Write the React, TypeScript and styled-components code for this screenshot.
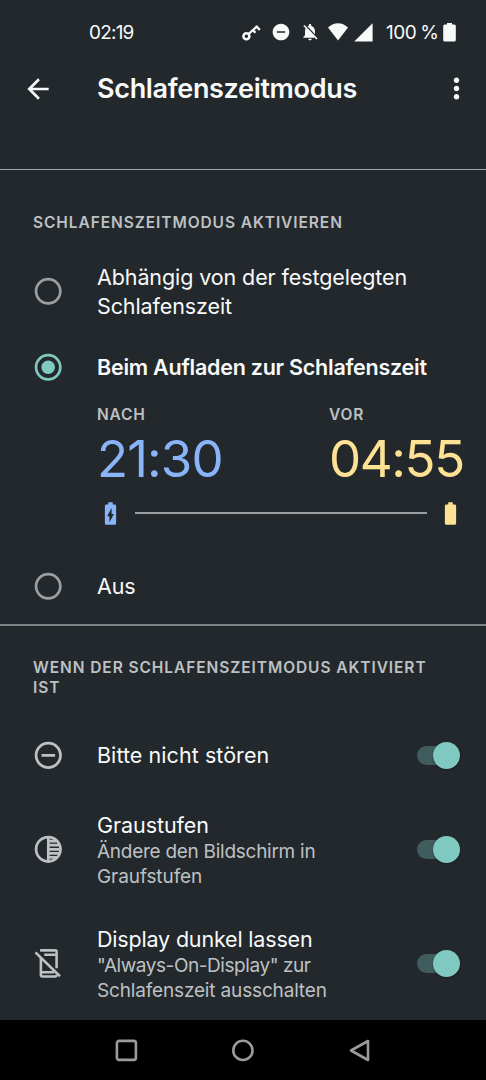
import React from 'react';
import styled, { createGlobalStyle } from 'styled-components';
import {
  MdArrowBack,
  MdBatteryChargingFull,
  MdBatteryFull,
  MdDoNotDisturbOn,
  MdMoreVert,
  MdNotificationsOff,
  MdRadioButtonChecked,
  MdRadioButtonUnchecked,
  MdRemoveCircleOutline,
  MdTonality,
} from 'react-icons/md';

const color = {
  background: '#23282c',
  text: '#f8fafa',
  muted: '#bdc1c4',
  outline: '#9b9fa2',
  accent: '#80c9c1',
  track: '#405c5d',
  start: '#8ab4f8',
  end: '#fde293',
};

const GlobalStyle = createGlobalStyle`
  *, *::before, *::after { box-sizing: border-box; }
  body { margin: 0; background: ${color.background}; }
`;

const Screen = styled.div`
  display: flex;
  flex-direction: column;
  width: 486px;
  height: 1080px;
  overflow: hidden;
  background: ${color.background};
  color: ${color.text};
  font-family: Inter, 'Liberation Sans', sans-serif;
  svg { display: block; flex: none; }
`;

const StatusBar = styled.div`
  display: flex;
  align-items: center;
  justify-content: space-between;
  height: 64px;
  padding: 0 30px 0 89px;
  font-size: 19px;
  letter-spacing: -0.8px;
`;

const StatusIcons = styled.div`
  display: flex;
  align-items: center;
`;

const StatusGlyph = styled.span<{ $gap?: number }>`
  display: flex;
  margin-right: ${(p) => p.$gap ?? 0}px;
`;

const BatteryText = styled.span`
  width: 52px;
  margin-right: 5px;
  letter-spacing: -0.45px;
  word-spacing: -1px;
  white-space: nowrap;
`;

const AppBar = styled.header`
  display: flex;
  align-items: center;
  height: 64px;
  padding: 0 13px 14px 22px;
  border-bottom: 1px solid #202529;
`;

const Title = styled.h1`
  flex: 1;
  margin: 0 0 0 43px;
  font-size: 27px;
  font-weight: 600;
  line-height: 34px;
  letter-spacing: -0.33px;
`;

const ScrolledStrip = styled.div`
  height: 42px;
  border-bottom: 1px solid #a0a4a6;
`;

const ModeSection = styled.section`
  height: 456px;
  padding-top: 43px;
  border-bottom: 2px solid #7c8184;
`;

const ActionSection = styled.section`
  padding-top: 32px;
`;

const SectionHeading = styled.h2<{ $bottom: number }>`
  margin: 0 0 ${(p) => p.$bottom}px;
  padding: 0 40px 0 33px;
  color: ${color.muted};
  font-size: 15.5px;
  font-weight: 600;
  line-height: 20px;
  letter-spacing: 0.92px;
`;

const RadioRow = styled.div<{ $top: number }>`
  display: flex;
  align-items: center;
  margin-top: ${(p) => p.$top}px;
  padding-left: 32.3px;
`;

const RadioLabel = styled.span<{ $strong?: boolean }>`
  margin-left: 32.3px;
  font-size: 21.5px;
  font-weight: ${(p) => (p.$strong ? 600 : 400)};
  line-height: 29px;
  letter-spacing: ${(p) => (p.$strong ? -0.24 : -0.1)}px;
`;

const TimeRange = styled.div`
  display: flex;
  justify-content: space-between;
  margin: 20.5px 22px 0 97px;
`;

const TimeColumn = styled.div`
  width: 135px;
`;

const TimeLabel = styled.div`
  color: ${color.muted};
  font-size: 15.5px;
  font-weight: 600;
  line-height: 22px;
  letter-spacing: 0.8px;
`;

const TimeValue = styled.div<{ $tone: string; $tracking: number }>`
  color: ${(p) => p.$tone};
  font-size: 51px;
  line-height: 66px;
  letter-spacing: ${(p) => p.$tracking}px;
  white-space: nowrap;
`;

const ChargeSpan = styled.div`
  display: flex;
  align-items: center;
  justify-content: space-between;
  height: 43px;
  margin: 0 22px 0 97px;
`;

const SpanLine = styled.div`
  width: 292px;
  height: 2px;
  background: ${color.outline};
`;

const SettingRow = styled.div<{ $height: number }>`
  display: flex;
  align-items: center;
  height: ${(p) => p.$height}px;
  padding: 0 26px 0 32px;
`;

const SettingText = styled.div`
  flex: 1;
  margin-left: 32.4px;
`;

const SettingTitle = styled.div<{ $tracking: number }>`
  font-size: 21.5px;
  line-height: 28px;
  letter-spacing: ${(p) => p.$tracking}px;
`;

const SettingSummary = styled.div`
  margin-bottom: -2px;
  color: ${color.muted};
  font-size: 19px;
  line-height: 25.5px;
`;

const SummaryLine = styled.div<{ $tracking: number }>`
  letter-spacing: ${(p) => p.$tracking}px;
  white-space: nowrap;
`;

const SwitchTrack = styled.span`
  display: flex;
  align-items: center;
  justify-content: flex-end;
  width: 43px;
  height: 19px;
  border-radius: 10px;
  background: linear-gradient(90deg, ${color.track} 34px, transparent 34px);
`;

const Thumb = styled.span`
  flex: none;
  width: 27px;
  height: 27px;
  border-radius: 50%;
  background: ${color.accent};
  box-shadow: 0 1px 2px rgba(0, 0, 0, 0.35);
`;

const NavBar = styled.nav`
  display: flex;
  align-items: center;
  justify-content: center;
  gap: 92px;
  flex: none;
  height: 60px;
  margin-top: auto;
  padding-top: 1px;
  background: #000;
`;

const KeyIcon = () => (
  <svg width="19" height="17" viewBox="0 0 19 17" fill="none" stroke={color.text}>
    <circle cx="4.4" cy="12.2" r="3" strokeWidth="2.5" />
    <path d="M6.6 10 15.2 2.2" strokeWidth="2.3" />
    <path d="M10.8 6 13.4 8.8M14.2 2.2 17.8 6" strokeWidth="2.4" />
  </svg>
);

const WifiIcon = () => (
  <svg width="20" height="18" viewBox="0 0 20 18" fill={color.text}>
    <path d="M0 4.6C6-1.2 14-1.2 20 4.6L10 17.4Z" />
  </svg>
);

const SignalIcon = () => (
  <svg width="19" height="19" viewBox="0 0 19 19" fill={color.text}>
    <path d="M18.6.2V18.6H.2Z" />
  </svg>
);

const StatusBatteryIcon = () => (
  <svg width="13" height="19" viewBox="0 0 13 19" fill={color.text}>
    <path d="M4 0h5v1.5h2.4A1.5 1.5 0 0 1 12.8 3v14a1.5 1.5 0 0 1-1.5 1.5H1.7A1.5 1.5 0 0 1 .2 17V3a1.5 1.5 0 0 1 1.5-1.5H4Z" />
  </svg>
);

const DisplayOffIcon = () => (
  <svg width="32.6" height="32.6" viewBox="0 0 33 33" fill="none" stroke={color.muted}>
    <path d="M8.2 3.4H23.4Q24.9 3.4 24.9 4.9V21.6" strokeWidth="2.6" />
    <path d="M9 10V28.1Q9 29.8 10.5 29.8H23.4Q24.9 29.8 24.9 28" strokeWidth="2.6" />
    <path d="M12.4 7.9H24M9 25.6H22.6" strokeWidth="2.4" />
    <path d="M3.5 5.4 28.3 29.6" strokeWidth="2.6" />
  </svg>
);

const Radio = ({ checked = false }: { checked?: boolean }) =>
  checked ? (
    <MdRadioButtonChecked size={32.4} color={color.accent} />
  ) : (
    <MdRadioButtonUnchecked size={32.4} color={color.outline} />
  );

const Switch = () => (
  <SwitchTrack>
    <Thumb />
  </SwitchTrack>
);

interface Setting {
  icon: React.ReactNode;
  title: string;
  tracking: number;
  summary: { text: string; tracking: number }[];
  height: number;
}

const settings: Setting[] = [
  {
    icon: <MdRemoveCircleOutline size={32.6} color={color.muted} />,
    title: 'Bitte nicht stören',
    tracking: 0.06,
    summary: [],
    height: 74,
  },
  {
    icon: <MdTonality size={32.6} color={color.muted} />,
    title: 'Graustufen',
    tracking: -0.06,
    summary: [
      { text: 'Ändere den Bildschirm in', tracking: -0.27 },
      { text: 'Graufstufen', tracking: -0.08 },
    ],
    height: 114,
  },
  {
    icon: <DisplayOffIcon />,
    title: 'Display dunkel lassen',
    tracking: -0.18,
    summary: [
      { text: '"Always-On-Display" zur', tracking: -0.44 },
      { text: 'Schlafenszeit ausschalten', tracking: -0.16 },
    ],
    height: 114,
  },
];

export default function App() {
  return (
    <>
      <GlobalStyle />
      <Screen>
        <StatusBar>
          <span>02:19</span>
          <StatusIcons>
            <StatusGlyph $gap={10}><KeyIcon /></StatusGlyph>
            <StatusGlyph $gap={9}><MdDoNotDisturbOn size={20} /></StatusGlyph>
            <StatusGlyph $gap={8}><MdNotificationsOff size={20} /></StatusGlyph>
            <StatusGlyph $gap={6}><WifiIcon /></StatusGlyph>
            <StatusGlyph $gap={13}><SignalIcon /></StatusGlyph>
            <BatteryText>100 %</BatteryText>
            <StatusBatteryIcon />
          </StatusIcons>
        </StatusBar>
        <AppBar>
          <MdArrowBack size={32} />
          <Title>Schlafenszeitmodus</Title>
          <MdMoreVert size={33} />
        </AppBar>
        <ScrolledStrip />
        <ModeSection>
          <SectionHeading $bottom={29.5}>SCHLAFENSZEITMODUS AKTIVIEREN</SectionHeading>
          <RadioRow $top={0}>
            <Radio />
            <RadioLabel>Abhängig von der festgelegten<br />Schlafenszeit</RadioLabel>
          </RadioRow>
          <RadioRow $top={30.5}>
            <Radio checked />
            <RadioLabel $strong>Beim Aufladen zur Schlafenszeit</RadioLabel>
          </RadioRow>
          <TimeRange>
            <TimeColumn>
              <TimeLabel>NACH</TimeLabel>
              <TimeValue $tone={color.start} $tracking={-0.9}>21:30</TimeValue>
            </TimeColumn>
            <TimeColumn>
              <TimeLabel>VOR</TimeLabel>
              <TimeValue $tone={color.end} $tracking={-1.4}>04:55</TimeValue>
            </TimeColumn>
          </TimeRange>
          <ChargeSpan>
            <MdBatteryChargingFull size={27} color={color.start} />
            <SpanLine />
            <MdBatteryFull size={27} color={color.end} />
          </ChargeSpan>
          <RadioRow $top={35}>
            <Radio />
            <RadioLabel>Aus</RadioLabel>
          </RadioRow>
        </ModeSection>
        <ActionSection>
          <SectionHeading $bottom={20}>WENN DER SCHLAFENSZEITMODUS AKTIVIERT IST</SectionHeading>
          {settings.map((s) => (
            <SettingRow key={s.title} $height={s.height}>
              {s.icon}
              <SettingText>
                <SettingTitle $tracking={s.tracking}>{s.title}</SettingTitle>
                {s.summary.length > 0 && (
                  <SettingSummary>
                    {s.summary.map((line) => (
                      <SummaryLine key={line.text} $tracking={line.tracking}>{line.text}</SummaryLine>
                    ))}
                  </SettingSummary>
                )}
              </SettingText>
              <Switch />
            </SettingRow>
          ))}
        </ActionSection>
        <NavBar>
          <svg width="24" height="24" viewBox="0 0 24 24" fill="none" stroke="#9b9b9b" strokeWidth="2.6">
            <rect x="1.9" y="1.9" width="19" height="19" rx="2.2" />
          </svg>
          <svg width="24" height="24" viewBox="0 0 24 24" fill="none" stroke="#9b9b9b" strokeWidth="2.6">
            <circle cx="11.9" cy="11.4" r="9.6" />
          </svg>
          <svg width="24" height="24" viewBox="0 0 24 24" fill="none" stroke="#9b9b9b" strokeWidth="2.6" strokeLinejoin="round">
            <path d="M21 2V21L4 11.5Z" />
          </svg>
        </NavBar>
      </Screen>
    </>
  );
}
